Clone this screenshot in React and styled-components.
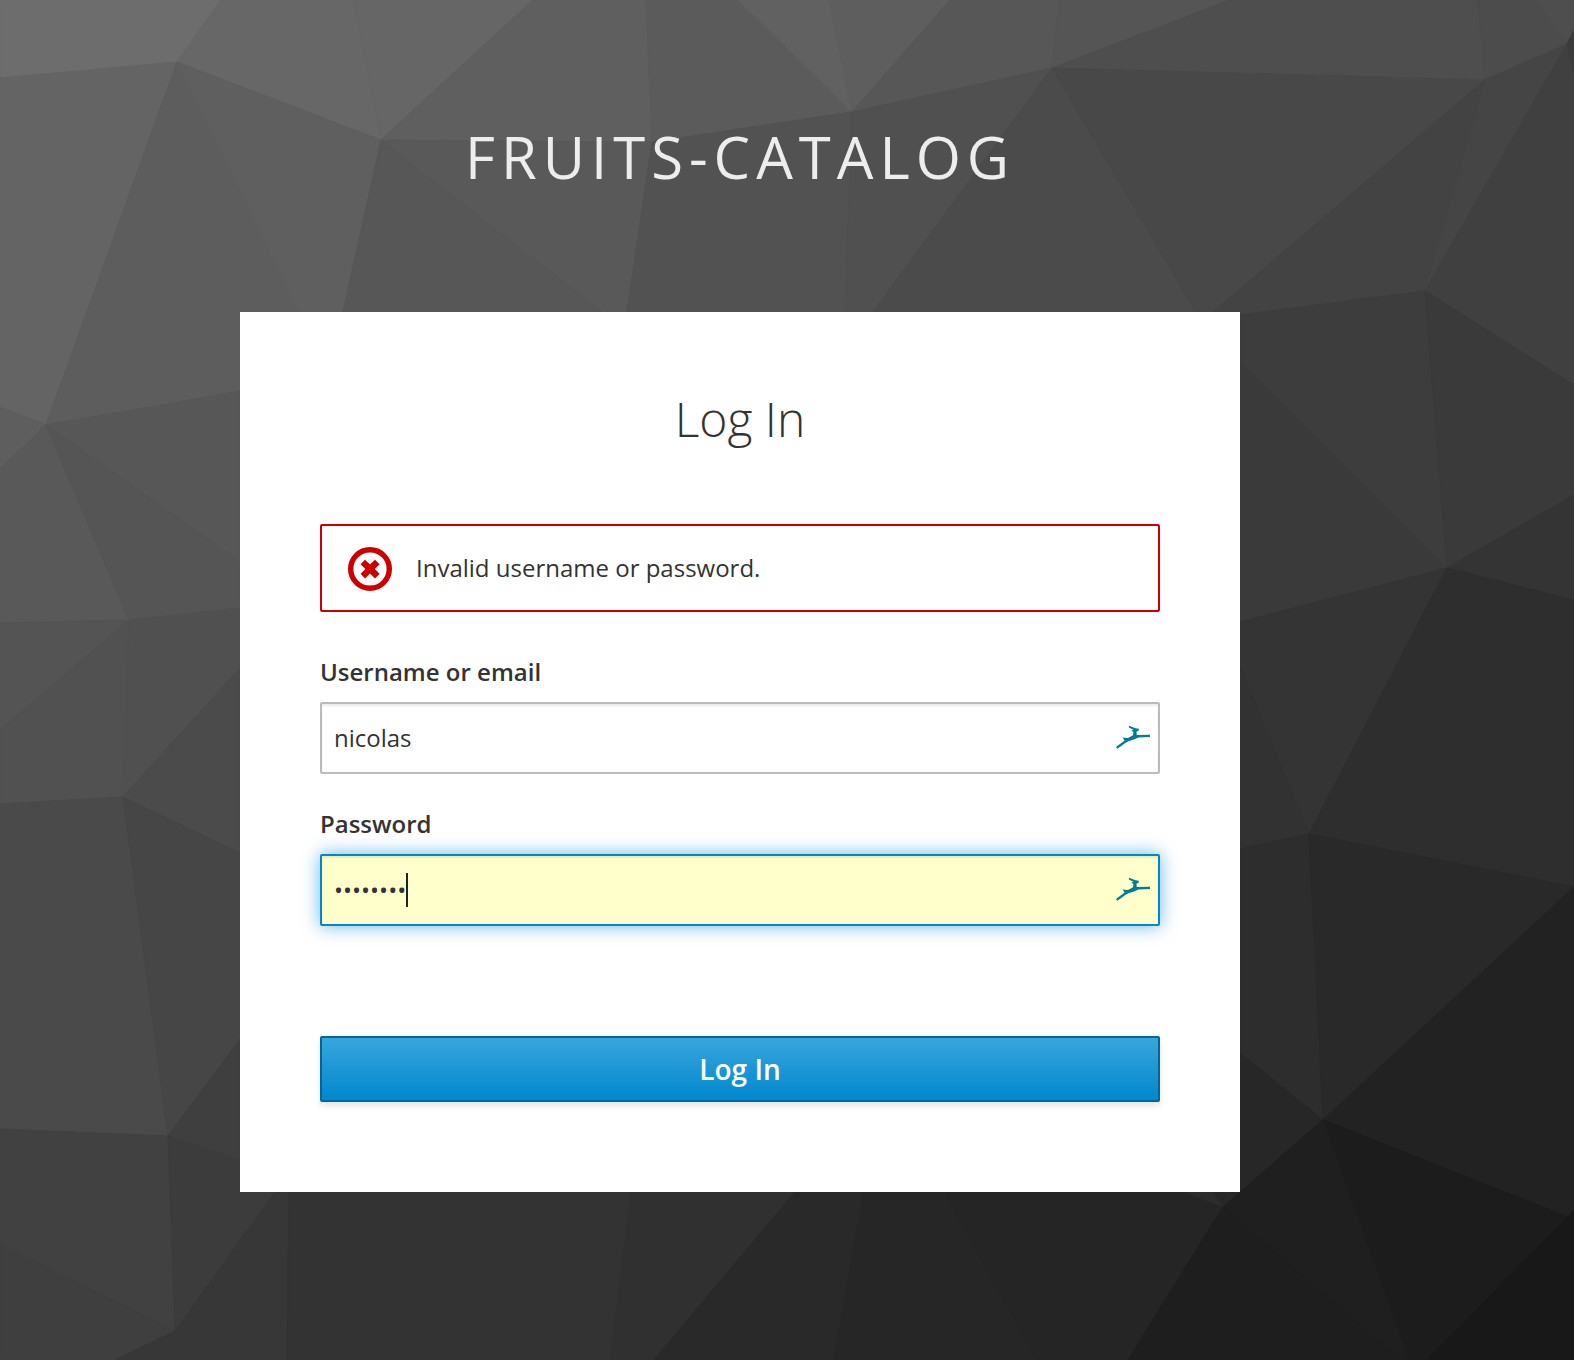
import React from "react";
import styled, { createGlobalStyle, css } from "styled-components";

const GlobalStyle = createGlobalStyle`
  *, *::before, *::after { box-sizing: border-box; }
  body {
    margin: 0;
    background: #333333;
    color: #333333;
    font-family: "Open Sans", "Noto Sans", sans-serif;
    font-size: 24px;
  }
`;

/* Facets of the low-poly backdrop: [fill, points] */
const FACETS = [
  ["#6d6d6d", "0,0 221,0 177,62 0,78"],
  ["#676767", "221,0 354,0 381,140 177,62"],
  ["#666666", "354,0 533,0 381,140"],
  ["#5f5f5f", "533,0 646,0 652,142 381,140"],
  ["#5b5b5b", "646,0 738,0 852,112 652,142"],
  ["#616161", "738,0 829,0 852,112"],
  ["#5e5e5e", "829,0 950,0 852,112"],
  ["#575757", "950,0 1059,0 1052,68 852,112"],
  ["#555555", "1059,0 1230,0 1052,68"],
  ["#4e4e4e", "1230,0 1478,0 1485,80 1052,68"],
  ["#4c4c4c", "1478,0 1536,0 1567,44 1485,80"],
  ["#4e4e4e", "1536,0 1574,0 1574,30 1567,44"],
  ["#3b3b3b", "1567,44 1574,30 1574,80"],
  ["#646464", "0,78 177,62 46,425 0,407"],
  ["#5d5d5d", "177,62 299,312 299,391 240,391 46,425"],
  ["#5f5f5f", "177,62 381,140 343,312 299,312"],
  ["#575757", "381,140 603,312 343,312"],
  ["#595959", "381,140 652,142 627,312 603,312"],
  ["#525252", "652,142 852,112 845,312 627,312"],
  ["#505050", "852,112 1052,68 873,312 845,312"],
  ["#4b4b4b", "1052,68 1196,312 873,312"],
  ["#484848", "1052,68 1485,80 1213,312 1196,312"],
  ["#434343", "1485,80 1425,291 1240,315 1213,312"],
  ["#454545", "1485,80 1567,44 1425,291"],
  ["#404040", "1567,44 1574,80 1574,385 1425,291"],
  ["#5e5e5e", "0,407 46,425 0,469"],
  ["#595959", "0,469 46,425 129,620 0,623"],
  ["#575757", "46,425 240,391 240,562"],
  ["#555555", "46,425 240,562 240,608 129,620"],
  ["#545454", "0,623 129,620 0,730"],
  ["#515151", "0,730 129,620 123,797 0,804"],
  ["#505050", "129,620 240,608 240,668 123,797"],
  ["#4b4b4b", "123,797 240,668 240,853"],
  ["#4a4a4a", "0,804 123,797 168,1136 0,1129"],
  ["#464646", "123,797 240,853 240,1039 168,1136"],
  ["#3f3f3f", "168,1136 240,1039 240,1160"],
  ["#414141", "0,1129 168,1136 175,1331 0,1245"],
  ["#3f3f3f", "0,1245 175,1331 115,1360 0,1360"],
  ["#3c3c3c", "168,1136 240,1160 275,1192 175,1331"],
  ["#373737", "175,1331 275,1192 289,1192 287,1360 115,1360"],
  ["#333333", "289,1192 631,1192 610,1360 287,1360"],
  ["#303030", "631,1192 795,1192 654,1360 610,1360"],
  ["#292929", "795,1192 864,1192 834,1360 654,1360"],
  ["#262626", "864,1192 945,1192 1037,1360 834,1360"],
  ["#252525", "945,1192 1185,1192 1223,1207 1128,1360 1037,1360"],
  ["#2c2c2c", "1185,1192 1214,1192 1223,1207"],
  ["#3d3d3d", "1425,291 1240,315 1240,361 1447,568"],
  ["#3a3a3a", "1425,291 1574,385 1574,495 1447,568"],
  ["#3a3a3a", "1240,361 1447,568 1240,622"],
  ["#343434", "1447,568 1574,495 1574,600"],
  ["#343434", "1447,568 1240,622 1240,667 1309,834"],
  ["#323232", "1240,667 1309,834 1240,849"],
  ["#2e2e2e", "1447,568 1574,600 1574,887 1309,834"],
  ["#2d2d2d", "1309,834 1240,849 1240,1053 1323,1120"],
  ["#292929", "1309,834 1574,887 1323,1120"],
  ["#272727", "1323,1120 1240,1053 1214,1192 1223,1207"],
  ["#222222", "1323,1120 1574,887 1574,1210 1568,1217"],
  ["#1c1c1c", "1323,1120 1568,1217 1427,1360 1409,1360"],
  ["#1f1f1f", "1323,1120 1409,1360 1400,1360 1223,1207"],
  ["#1e1e1e", "1223,1207 1400,1360 1128,1360"],
  ["#181818", "1568,1217 1574,1210 1574,1360 1427,1360"],
];

const Page = styled.div`
  position: relative;
  min-height: 100vh;
  padding: 122px 94px 168px 0;
  display: flex;
  flex-direction: column;
  align-items: center;
  gap: 120px;
`;

const BackdropSvg = styled.svg`
  position: absolute;
  inset: 0;
  z-index: -1;
  width: 100%;
  height: 100%;
`;

const Realm = styled.header`
  color: #ededed;
  font-size: 58px;
  line-height: 70px;
  letter-spacing: 6px;
  text-transform: uppercase;
  text-align: center;
`;

const Card = styled.main`
  width: 100%;
  max-width: 1000px;
  padding: 80px 80px 90px;
  background: #ffffff;
`;

const Title = styled.h1`
  margin: 0 0 78px;
  font-size: 48px;
  font-weight: 300;
  line-height: 54px;
  text-align: center;
`;

const Alert = styled.div`
  display: flex;
  align-items: center;
  gap: 24px;
  margin-bottom: 42px;
  padding: 20px 26px;
  border: 2px solid #cc0000;
  border-radius: 2px;
  line-height: 44px;
`;

const AlertIcon = styled.svg`
  flex: none;
  width: 44px;
  height: 44px;
`;

const Form = styled.form`
  display: flex;
  flex-direction: column;
  gap: 32px;
`;

const Field = styled.div`
  display: flex;
  flex-direction: column;
  gap: 12px;
`;

const Label = styled.label`
  font-weight: 600;
  line-height: 36px;
`;

const InputWrap = styled.div`
  position: relative;
  display: flex;
`;

const Input = styled.input`
  flex: 1;
  min-width: 0;
  height: 72px;
  padding: 0 60px 2px 12px;
  border: 2px solid #bbbbbb;
  border-radius: 2px;
  outline: none;
  background: #ffffff;
  box-shadow: inset 0 2px 2px rgba(3, 3, 3, 0.08);
  color: #333333;
  font: inherit;
  ${(p) =>
    p.$active &&
    css`
      border-color: #0088ce;
      background: #ffffcc;
      box-shadow: inset 0 2px 2px rgba(3, 3, 3, 0.08), 0 0 18px rgba(0, 136, 206, 0.6);
      caret-color: transparent;
    `}
`;

const Caret = styled.span`
  position: absolute;
  left: 86px;
  top: 19px;
  width: 2px;
  height: 34px;
  background: #222222;
`;

const FillIcon = styled.svg`
  position: absolute;
  right: 10px;
  top: 23px;
  width: 34px;
  height: 24px;
`;

const Submit = styled.button`
  height: 66px;
  margin-top: 78px;
  border: 2px solid #00659c;
  border-radius: 2px;
  background: linear-gradient(#39a5dc, #0088ce);
  box-shadow: 0 4px 6px rgba(3, 3, 3, 0.1);
  color: #ffffff;
  font: inherit;
  font-size: 28px;
  font-weight: 600;
  line-height: 36px;
  cursor: pointer;
`;

function Backdrop() {
  return (
    <BackdropSvg viewBox="0 0 1574 1360" preserveAspectRatio="xMidYMid slice" aria-hidden="true">
      {FACETS.map(([fill, points]) => (
        <polygon key={points} points={points} fill={fill} stroke={fill} strokeWidth="1" />
      ))}
    </BackdropSvg>
  );
}

function Impala() {
  return (
    <FillIcon viewBox="0 0 34 24" aria-hidden="true">
      <path
        fill="#007c97"
        d="M0 22 L8.6 15.6 L6.6 12.4 L12 13 L17 10.2 L17.4 7 L15.4 5.4 L17.6 4.8 L12.8 2.4 L13 .8 L19.6 3.2 L22.8 3.8 L22.6 5.8 L20.4 6.8 L20.8 9.9 L34 9.8 L34 12 L22.5 12.4 L18 14.6 L12.4 16.2 L9.6 17.8 L1.4 23.7 Z"
      />
    </FillIcon>
  );
}

export default function App() {
  return (
    <>
      <GlobalStyle />
      <Page>
        <Backdrop />
        <Realm>fruits-catalog</Realm>
        <Card>
          <Title>Log In</Title>
          <Alert role="alert">
            <AlertIcon viewBox="0 0 44 44" overflow="visible" aria-hidden="true">
              <circle cx="22" cy="23" r="19.3" fill="none" stroke="#cc0000" strokeWidth="5.4" />
              <path
                fill="#cc0000"
                d="M17 13.7 L22 18.6 L27 13.7 L31.6 18.2 L26.8 23 L31.6 27.8 L27 32.4 L22 27.6 L17 32.4 L12.6 27.8 L17.4 23 L12.6 18.2 Z"
              />
            </AlertIcon>
            <span>Invalid username or password.</span>
          </Alert>
          <Form onSubmit={(e) => e.preventDefault()}>
            <Field>
              <Label htmlFor="username">Username or email</Label>
              <InputWrap>
                <Input id="username" type="text" defaultValue="nicolas" autoComplete="off" />
                <Impala />
              </InputWrap>
            </Field>
            <Field>
              <Label htmlFor="password">Password</Label>
              <InputWrap>
                <Input id="password" type="password" defaultValue="password" autoComplete="off" $active />
                <Caret />
                <Impala />
              </InputWrap>
            </Field>
            <Submit type="submit">Log In</Submit>
          </Form>
        </Card>
      </Page>
    </>
  );
}
